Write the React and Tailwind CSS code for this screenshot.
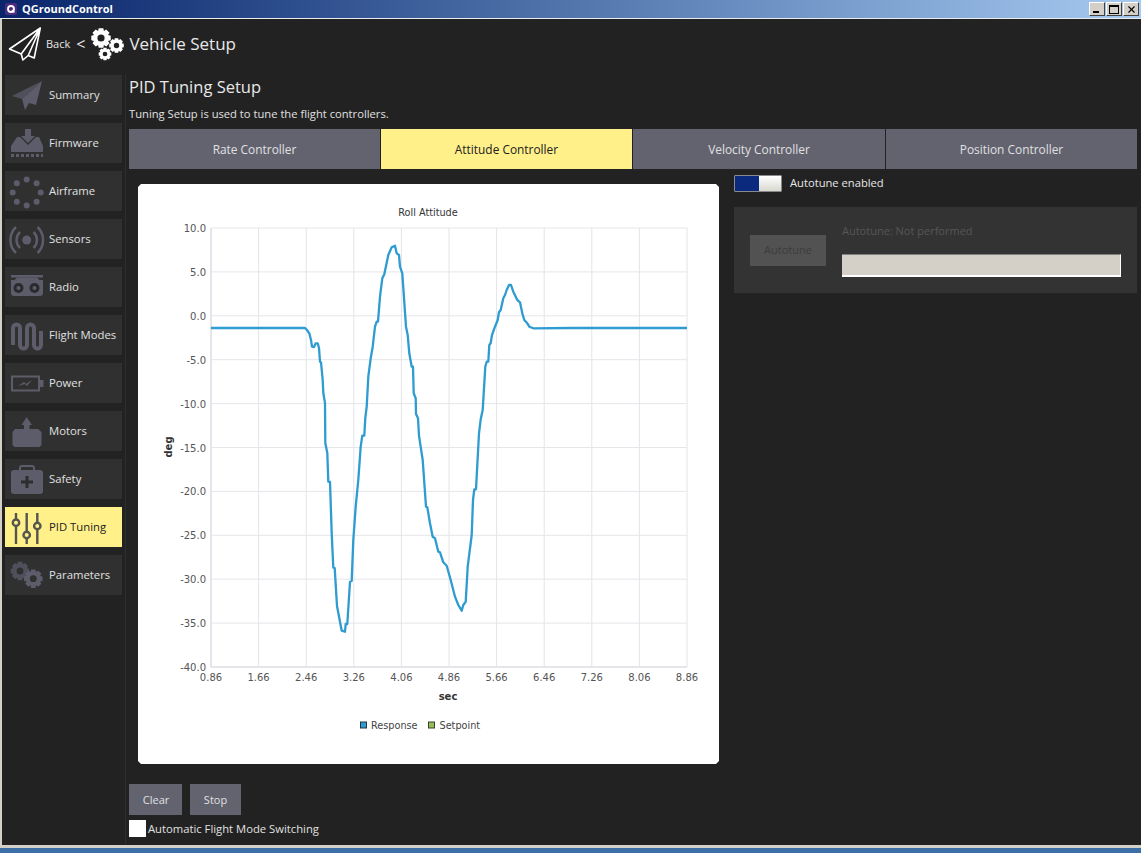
import React from "react";
import { X } from "lucide-react";

const GREY = "#5c5c6a";

const gearPath = (cx, cy, R, r, teeth, hole) => {
  const pts = [];
  const step = (Math.PI * 2) / teeth;
  for (let i = 0; i < teeth; i++) {
    const a = i * step;
    [
      [r, -0.5],
      [R, -0.3],
      [R, 0.3],
      [r, 0.5],
    ].forEach(([rad, f]) => {
      const t = a + f * step;
      pts.push(`${(cx + rad * Math.cos(t)).toFixed(2)} ${(cy + rad * Math.sin(t)).toFixed(2)}`);
    });
  }
  const h = `M${cx - hole} ${cy}a${hole} ${hole} 0 1 0 ${hole * 2} 0a${hole} ${hole} 0 1 0 ${-hole * 2} 0Z`;
  return `M${pts.join("L")}Z${h}`;
};

const Gear = ({ cx, cy, R, fill, teeth = 8 }) => (
  <path d={gearPath(cx, cy, R, R * 0.76, teeth, R * 0.36)} fill={fill} fillRule="evenodd" />
);

const icons = {
  Summary: (
    <>
      <polygon points="37,6 7,21 17,24" fill="#50505c" />
      <polygon points="37,6 17,24 20,35 24,28 31,30" fill={GREY} />
    </>
  ),
  Firmware: (
    <>
      <path d="M20 6h6v7h4l-7 7-7-7h4z" fill={GREY} />
      <path d="M12 14h3l8 8 8-8h3l4 9v6H6v-6z" fill={GREY} />
      <path d="M6 32.5h32" stroke={GREY} strokeWidth="3" strokeDasharray="3 2" />
    </>
  ),
  Airframe: (
    <>
      {[0, 45, 90, 135, 180, 225, 270, 315].map((d) => (
        <circle
          key={d}
          cx={21.7 + 14 * Math.cos((d * Math.PI) / 180)}
          cy={21.5 + 13 * Math.sin((d * Math.PI) / 180)}
          r="3"
          fill={GREY}
        />
      ))}
    </>
  ),
  Sensors: (
    <g fill="none" stroke={GREY} strokeWidth="2.5">
      <circle cx="21.7" cy="21" r="4.5" fill={GREY} stroke="none" />
      <path d="M15 13a11 11 0 0 0 0 16M28.5 13a11 11 0 0 1 0 16" />
      <path d="M11 8a18 18 0 0 0 0 26M32.5 8a18 18 0 0 1 0 26" />
    </g>
  ),
  Radio: (
    <>
      <path d="M6 8h32v2.5H6z" fill={GREY} />
      <path d="M6 13h32v13a3 3 0 0 1-3 3H9a3 3 0 0 1-3-3z" fill={GREY} />
      <path d="M12 10.5h20l3 3H9z" fill={GREY} />
      <circle cx="13.5" cy="21" r="5" fill="#2a2a2e" />
      <circle cx="13.5" cy="21" r="2" fill={GREY} />
      <circle cx="29.5" cy="21" r="5" fill="#2a2a2e" />
      <circle cx="29.5" cy="21" r="2" fill={GREY} />
    </>
  ),
  "Flight Modes": (
    <path
      d="M8 30V13a3.5 3.5 0 0 1 7 0v17a3.5 3.5 0 0 0 7 0V13a3.5 3.5 0 0 1 7 0v17a3.5 3.5 0 0 0 7 0V16"
      fill="none"
      stroke={GREY}
      strokeWidth="4"
    />
  ),
  Power: (
    <>
      <rect x="7" y="13.5" width="27" height="14" fill="none" stroke={GREY} strokeWidth="2" />
      <rect x="35" y="17" width="3.5" height="7" fill={GREY} />
      <path d="M13 23l6-4 2 2 6-4-5 6-2-2z" fill={GREY} />
    </>
  ),
  Motors: (
    <>
      <polygon points="21.7,6 27,14 24.5,14 24.5,18 19,18 19,14 16.5,14" fill={GREY} />
      <path d="M10 18h23l3.5 3v13l-2 2H9.5l-2-2V21z" fill={GREY} />
    </>
  ),
  Safety: (
    <>
      <path d="M15 12V9a2 2 0 0 1 2-2h10a2 2 0 0 1 2 2v3" fill="none" stroke={GREY} strokeWidth="2" />
      <rect x="6" y="11" width="32" height="24" rx="3" fill={GREY} />
      <path d="M22 17v12M16 23h12" stroke="#2d2d30" strokeWidth="3" />
    </>
  ),
  "PID Tuning": (
    <g stroke="#55554f" strokeWidth="2.4" fill="#fff08a">
      <path d="M11 6v31M21.7 6v31M32.3 6v31" fill="none" />
      <circle cx="11" cy="15.7" r="3.2" />
      <circle cx="21.7" cy="28" r="3.2" />
      <circle cx="32.3" cy="19" r="3.2" />
    </g>
  ),
  Parameters: (
    <>
      <Gear cx={15} cy={16} R={9.5} fill="#50505c" />
      <Gear cx={28.3} cy={23.7} R={9.5} fill={GREY} />
    </>
  ),
};

const sidebarItems = [
  "Summary",
  "Firmware",
  "Airframe",
  "Sensors",
  "Radio",
  "Flight Modes",
  "Power",
  "Motors",
  "Safety",
  "PID Tuning",
  "Parameters",
];

const tabs = [
  { label: "Rate Controller", w: "w-[251px]" },
  { label: "Attitude Controller", w: "w-[251px]", active: true },
  { label: "Velocity Controller", w: "w-[252px]" },
  { label: "Position Controller", w: "w-[251px]" },
];

const curve =
  "211,328 305,328 307,330 309.3,333.3 311,340 312,346.7 314,347 315.7,343.3 317.7,343.3 319,348 320,361.7 321,362.3 322.7,380 323.3,393 325,403 325.3,443 327.3,453 328.3,481.7 330,482 331.7,533 333.3,567.7 334.7,568 337,606 341.7,630.7 345,631.7 345.7,624 347.3,624 350,581.7 351.7,581 353.3,540 355.7,506.7 358.3,480 360.7,446.7 362.3,435.7 364.3,435.7 365.3,418 366.7,406.7 368.3,376.7 370.7,358.3 372.7,346.7 375,326.7 376.7,321.7 378,321.7 380,296.7 382.3,278.3 384.3,274.3 388.3,255 391.7,247.3 395,245.7 396.7,253.3 399,255 400,266.7 402.3,273.3 406,326.7 407.7,335 409.3,353.3 411.7,366.7 413,366.7 413.7,393.3 415.7,398.3 416,414 418,418.3 419,435.7 422.7,460 426,506.7 427.3,507.3 430,523.3 432.7,536.7 435,538.3 438.3,551.7 440,552.3 443.3,562.3 446.7,565.7 450.7,580 455,596.7 458.3,605 461.7,610.7 463.3,605 465.7,601.7 467.7,566.7 471.7,535 473,500 474.3,489.3 476,489.3 479,433.3 480.7,419.3 482.7,410 485.3,366.7 486.7,361.7 488.3,361.7 489.3,345 490.7,343 492,335 495,326.7 497.7,320 499,312.3 500.7,310 503.3,298.3 505,295 506.7,290 509,285 511,285 513.3,291.7 517.3,300 520,302.3 522.3,313.3 524.3,320 527.3,323.3 529.3,326.7 533.3,328.3 570,328 687,328";

const yTicks = ["10.0", "5.0", "0.0", "-5.0", "-10.0", "-15.0", "-20.0", "-25.0", "-30.0", "-35.0", "-40.0"];
const xTicks = ["0.86", "1.66", "2.46", "3.26", "4.06", "4.86", "5.66", "6.46", "7.26", "8.06", "8.86"];
const chartFont = "'DejaVu Sans', sans-serif";

function RollChart() {
  return (
    <svg width="581" height="580" viewBox="138 184 581 580" className="block">
      <path d="M138 187l3-3h575l3 3v574l-3 3H141l-3-3z" fill="#fff" />
      <text x="428" y="216" textAnchor="middle" fontSize="9.7" fill="#333" fontFamily={chartFont}>
        Roll Attitude
      </text>
      {yTicks.map((t, i) => {
        const y = 228 + i * 43.9;
        return (
          <g key={t}>
            <line x1="211" x2="687" y1={y} y2={y} stroke="#e6e6ea" strokeWidth={i === 10 ? 2 : 1} />
            <text x="206" y={y + 4} textAnchor="end" fontSize="10" fill="#555" fontFamily={chartFont}>
              {t}
            </text>
          </g>
        );
      })}
      {xTicks.map((t, i) => {
        const x = 211 + i * 47.6;
        return (
          <g key={t}>
            <line x1={x} x2={x} y1="228" y2="667" stroke="#e4e4ea" strokeWidth={i === 0 ? 2 : 1} />
            <text x={x} y="681" textAnchor="middle" fontSize="10" fill="#555" fontFamily={chartFont}>
              {t}
            </text>
          </g>
        );
      })}
      <text x="448" y="700" textAnchor="middle" fontSize="10" fontWeight="bold" fill="#333" fontFamily={chartFont}>
        sec
      </text>
      <text
        transform="translate(172 447) rotate(-90)"
        textAnchor="middle"
        fontSize="10"
        fontWeight="bold"
        fill="#333"
        fontFamily={chartFont}
      >
        deg
      </text>
      <polyline points={curve} fill="none" stroke="#2e9bd1" strokeWidth="2.3" strokeLinejoin="round" />
      <rect x="360.5" y="722" width="6" height="6" fill="#2e9bd1" stroke="#234" strokeWidth="1" />
      <text x="371" y="729" fontSize="9.7" fill="#444" fontFamily={chartFont}>
        Response
      </text>
      <rect x="428.5" y="722" width="6" height="6" fill="#9bbb59" stroke="#343" strokeWidth="1" />
      <text x="439.5" y="729" fontSize="9.7" fill="#444" fontFamily={chartFont}>
        Setpoint
      </text>
    </svg>
  );
}

const winBtn =
  "w-[16px] h-[14px] flex items-center justify-center bg-[#d4d0c8] border-t border-l border-white border-r border-b border-r-[#404040] border-b-[#404040]";

function TitleBar() {
  return (
    <div className="h-[19px] shrink-0 flex items-center pl-[5px] pr-[2px] border-b border-[#e8ecf0] bg-gradient-to-r from-[#0a246a] to-[#a6caf0]">
      <svg width="12" height="12" viewBox="0 0 12 12" className="shrink-0">
        <rect width="12" height="12" rx="2" fill="#4b2a82" />
        <circle cx="6" cy="6" r="3" fill="none" stroke="#fff" strokeWidth="1.8" />
        <path d="M7 7l2.5 2.5" stroke="#fff" strokeWidth="1.5" />
      </svg>
      <span className="ml-[5px] text-[11px] font-bold text-white">QGroundControl</span>
      <div className="ml-auto flex gap-[1px]">
        <div className={winBtn}>
          <div className="w-[6px] h-[2px] bg-black mt-[6px] mr-[2px]" />
        </div>
        <div className={winBtn}>
          <div className="w-[10px] h-[9px] border border-t-2 border-black" />
        </div>
        <div className={winBtn}>
          <X size={11} strokeWidth={2.4} color="#000" />
        </div>
      </div>
    </div>
  );
}

function Header() {
  return (
    <div className="h-[55px] shrink-0 flex items-center pb-[5px] text-white">
      <svg width="34" height="36" viewBox="0 0 34 36" className="ml-[6px]">
        <path
          d="M32.3 2L1.5 23l11.7 5 1.7 6 5.3-4.5 6 2.5zM32.3 2L13.2 28M32.3 2L20.2 29.5"
          fill="none"
          stroke="#fff"
          strokeWidth="1.6"
          strokeLinejoin="round"
        />
      </svg>
      <span className="ml-[4px] text-[11px] text-[#e6e6e6]">Back</span>
      <span className="ml-[6px] text-base text-[#e6e6e6]">&lt;</span>
      <svg width="34" height="36" viewBox="90 22 34 36" className="ml-[5px] shrink-0">
        <Gear cx={101} cy={34} R={10} fill="#fff" />
        <Gear cx={116.5} cy={41.5} R={7.5} fill="#fff" />
        <Gear cx={105} cy={50} R={6.5} fill="#fff" />
      </svg>
      <span className="ml-[5px] text-[17px] text-[#e8e8e8]">Vehicle Setup</span>
    </div>
  );
}

function Sidebar() {
  return (
    <div className="w-[117px] ml-[3px] mt-px flex flex-col gap-[8px] shrink-0">
      {sidebarItems.map((name) => {
        const active = name === "PID Tuning";
        return (
          <div
            key={name}
            className={`h-[40px] flex items-center text-[11.3px] ${active ? "bg-[#fff08a] text-[#222]" : "bg-[#303030] text-[#e0e0e0]"}`}
          >
            <svg width="44" height="40" viewBox="0 0 44 40" className="shrink-0">
              {icons[name]}
            </svg>
            <span>{name}</span>
          </div>
        );
      })}
    </div>
  );
}

export default function App() {
  return (
    <div
      className="w-[1141px] h-[853px] flex flex-col overflow-hidden bg-[#d4d0c8]"
      style={{ fontFamily: "'Open Sans', sans-serif" }}
    >
      <TitleBar />
      <div className="flex-1 min-h-0 ml-[2px] bg-[#222222] flex flex-col">
        <Header />
        <div className="flex-1 min-h-0 flex">
          <Sidebar />
          <div className="ml-[3px] w-px bg-[#2e2e2e] shrink-0" />
          <div className="ml-[3px] flex-1 flex flex-col">
            <div className="text-[16.5px] leading-[26px] text-[#e8e8e8]">PID Tuning Setup</div>
            <div className="mt-[7px] text-[11.2px] leading-[14px] text-[#e0e0e0]">
              Tuning Setup is used to tune the flight controllers.
            </div>
            <div className="mt-[8px] flex gap-px w-[1008px] h-[40px]">
              {tabs.map((t) => (
                <div
                  key={t.label}
                  className={`${t.w} flex items-center justify-center pt-px text-[11.9px] ${t.active ? "bg-[#fff08a] text-[#222]" : "bg-[#636370] text-[#e0e0e0]"}`}
                >
                  {t.label}
                </div>
              ))}
            </div>
            <div className="flex">
              <div className="ml-[9px] mt-[15px]">
                <RollChart />
              </div>
              <div className="ml-[15px] mt-[6px] w-[403px]">
                <div className="flex items-center h-[17px]">
                  <div className="w-[48px] h-[17px] flex border border-[#8a8a8a] rounded-[1px]">
                    <div className="w-[24px] bg-[#0b2a7d]" />
                    <div className="flex-1 bg-gradient-to-b from-white to-[#d8d8d0]" />
                  </div>
                  <span className="ml-[8px] text-[11.2px] text-[#e6e6e6]">Autotune enabled</span>
                </div>
                <div className="mt-[15px] h-[86px] bg-[#333333] flex items-center pl-[16px]">
                  <div className="w-[76px] h-[31px] bg-[#525252] flex items-center justify-center text-[11px] text-[#3c3c3c]">
                    Autotune
                  </div>
                  <div className="ml-[16px] w-[279px]">
                    <div className="-mt-[1px] text-[11px] leading-[15px] text-[#565656]">Autotune: Not performed</div>
                    <div className="mt-[16px] h-[23px] bg-[#d4d0c8] border-t border-[#808080] border-b-2 border-r border-b-white border-r-white" />
                  </div>
                </div>
              </div>
            </div>
            <div className="mt-[20px] flex gap-[8px]">
              <div className="w-[53px] h-[31px] pt-px pl-px bg-[#636370] flex items-center justify-center text-[11px] text-[#e0e0e0]">
                Clear
              </div>
              <div className="w-[51px] h-[31px] pt-px bg-[#636370] flex items-center justify-center text-[11px] text-[#e0e0e0]">
                Stop
              </div>
            </div>
            <div className="mt-[5px] flex items-center">
              <div className="w-[17px] h-[17px] bg-white" />
              <span className="ml-[2px] pt-px text-[11.25px] text-[#e0e0e0]">Automatic Flight Mode Switching</span>
            </div>
          </div>
        </div>
      </div>
      <div className="h-[3px] shrink-0" />
      <div className="h-[5px] shrink-0 bg-[#3d6ea5]" />
    </div>
  );
}
